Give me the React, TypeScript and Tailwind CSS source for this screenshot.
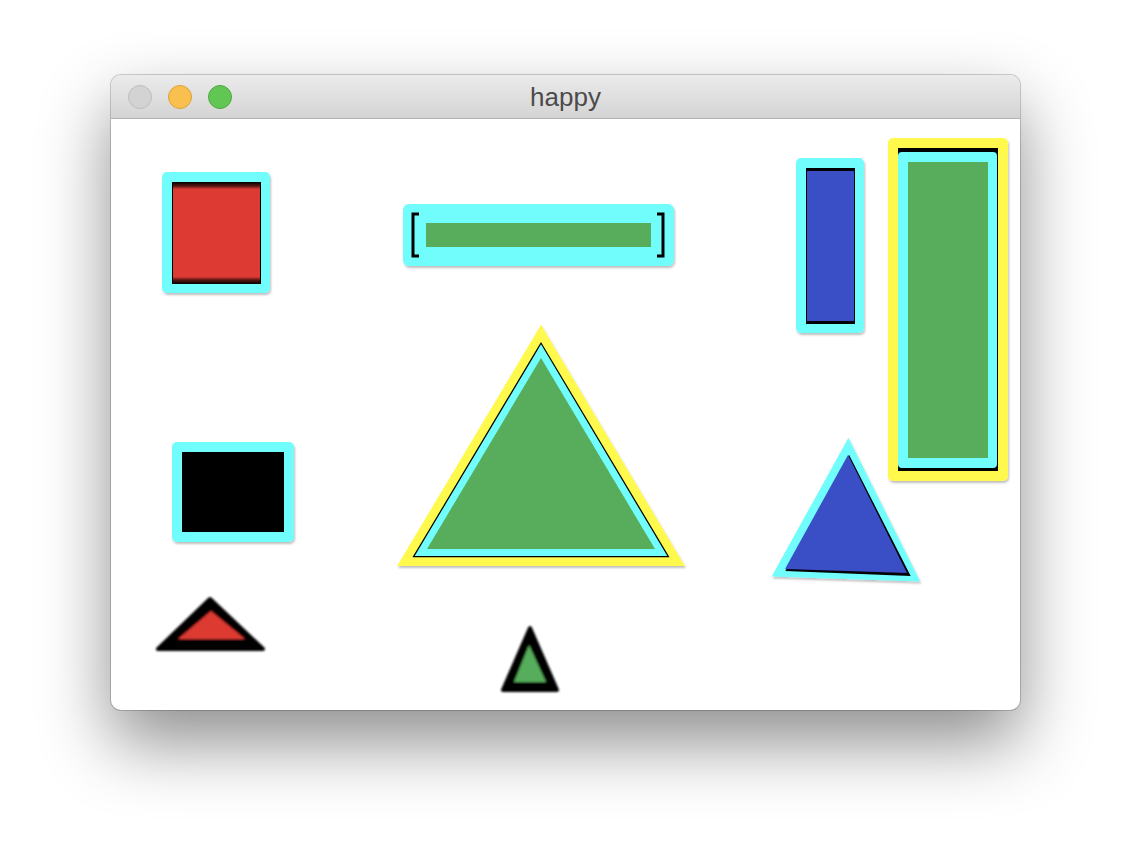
import React from 'react';

// Palette picked from the screenshot
const C = {
  cyan: '#70fdfc',
  yellow: '#fff94e',
  green: '#57ad5b',
  red: '#dd3a33',
  blue: '#3a4ec5',
  black: '#000000',
} as const;

function TrafficLights() {
  return (
    <div className="flex items-center gap-4 pl-[17px]">
      <span className="h-6 w-6 rounded-full border border-[#bdbdbd] bg-[#d3d3d3]" />
      <span className="h-6 w-6 rounded-full border border-[#dca23c] bg-[#f9c04f]" />
      <span className="h-6 w-6 rounded-full border border-[#4ea843] bg-[#62c655]" />
    </div>
  );
}

function Canvas() {
  // viewBox uses page coordinates so shapes can be placed as measured
  return (
    <svg className="block" width={909} height={591} viewBox="111 119 909 591">
      <defs>
        <filter id="soft" x="-20%" y="-20%" width="140%" height="140%">
          <feDropShadow dx="1" dy="2" stdDeviation="1" floodColor="#000" floodOpacity="0.25" />
        </filter>
        <filter id="blur" x="-20%" y="-20%" width="140%" height="140%">
          <feGaussianBlur stdDeviation="1.3" />
        </filter>
        <linearGradient id="redEdge" x1="0" y1="0" x2="0" y2="1">
          <stop offset="0" stopColor="#000" />
          <stop offset="0.04" stopColor="#5a1512" />
          <stop offset="0.07" stopColor={C.red} />
          <stop offset="0.93" stopColor={C.red} />
          <stop offset="0.96" stopColor="#5a1512" />
          <stop offset="1" stopColor="#000" />
        </linearGradient>
      </defs>

      {/* red box */}
      <g filter="url(#soft)">
        <rect x={162} y={172} width={108} height={121} rx={5} fill={C.cyan} />
      </g>
      <rect x={172} y={182} width={89} height={102} fill={C.black} />
      <rect x={173} y={182} width={87} height={102} fill="url(#redEdge)" />

      {/* bar with brackets */}
      <g filter="url(#soft)">
        <rect x={403} y={204} width={271} height={62} rx={6} fill={C.cyan} />
      </g>
      <rect x={426} y={223} width={225} height={24} fill={C.green} />
      <path d="M419 214 H413 V256 H419" fill="none" stroke={C.black} strokeWidth={3} />
      <path d="M657 214 H663 V256 H657" fill="none" stroke={C.black} strokeWidth={3} />

      {/* blue box */}
      <g filter="url(#soft)">
        <rect x={796} y={158} width={68} height={175} rx={5} fill={C.cyan} />
      </g>
      <rect x={806} y={168} width={49} height={156} fill={C.black} />
      <rect x={807} y={171} width={47} height={150} fill={C.blue} />

      {/* tall green box */}
      <g filter="url(#soft)">
        <rect x={888} y={138} width={120} height={343} rx={5} fill={C.yellow} />
      </g>
      <rect x={898} y={148} width={100} height={323} fill={C.black} />
      <rect x={898} y={152} width={99} height={316} rx={4} fill={C.cyan} />
      <rect x={908} y={162} width={80} height={296} fill={C.green} />

      {/* black box */}
      <g filter="url(#soft)">
        <rect x={172} y={442} width={122} height={100} rx={5} fill={C.cyan} />
      </g>
      <rect x={182} y={452} width={102} height={80} fill={C.black} />

      {/* big triangle */}
      <g filter="url(#soft)">
        <polygon points="541,358 427,549 655,549" fill="none" stroke={C.yellow} strokeWidth={34} strokeLinejoin="miter" />
      </g>
      <polygon points="541,358 427,549 655,549" fill="none" stroke={C.black} strokeWidth={16.5} strokeLinejoin="miter" />
      <polygon points="541,358 427,549 655,549" fill="none" stroke={C.cyan} strokeWidth={14} strokeLinejoin="miter" />
      <polygon points="541,358 427,549 655,549" fill={C.green} />

      {/* blue triangle */}
      <g filter="url(#soft)">
        <polygon points="848,455 785,569 907,573" fill="none" stroke={C.cyan} strokeWidth={16} strokeLinejoin="miter" />
      </g>
      <polygon points="848,455 785,569 907,573" fill={C.cyan} />
      <polygon points="849,457 787,570 909,575" fill={C.black} stroke={C.black} strokeWidth={2} />
      <polygon points="848,455 785,569 907,573" fill={C.blue} />

      {/* small red triangle */}
      <g filter="url(#blur)">
        <polygon points="210,599 158,649 263,649" fill={C.black} stroke={C.black} strokeWidth={4} strokeLinejoin="round" />
        <polygon points="211,611 178,639 245,639" fill={C.red} />
      </g>

      {/* small green triangle */}
      <g filter="url(#blur)">
        <polygon points="530,628 503,690 557,690" fill={C.black} stroke={C.black} strokeWidth={4} strokeLinejoin="round" />
        <polygon points="529,645 514,682 546,682" fill={C.green} />
      </g>
    </svg>
  );
}

export default function App() {
  return (
    <div className="min-h-[858px] w-[1132px] bg-white pl-[111px] pt-[75px]">
      <div className="w-[909px] overflow-hidden rounded-[10px] bg-white shadow-[0_32px_70px_rgba(0,0,0,0.45),0_0_0_1px_rgba(0,0,0,0.18)]">
        <div className="grid h-[44px] grid-cols-[1fr_auto_1fr] items-center border-b border-[#b2b2b2] bg-gradient-to-b from-[#ebebeb] to-[#d4d4d4]">
          <TrafficLights />
          <span className="text-[26px] leading-[44px] text-[#4b4b4b] [font-family:'Liberation_Sans',Arial,sans-serif]">
            happy
          </span>
          <span />
        </div>
        <Canvas />
      </div>
    </div>
  );
}
